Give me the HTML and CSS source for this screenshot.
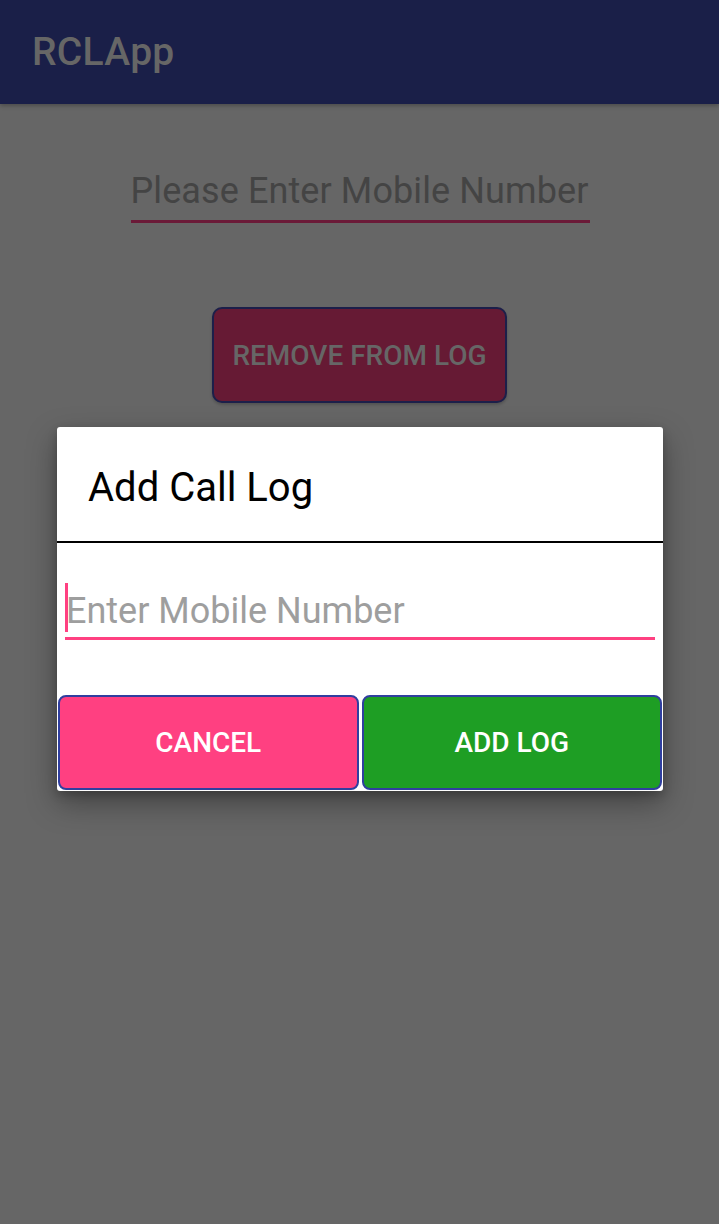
FILE: index.html
```html
<!DOCTYPE html>
<html lang="en">
<head>
<meta charset="utf-8">
<title>RCLApp</title>
<link rel="stylesheet" href="styles.css">
</head>
<body>
<header class="appbar"><h1 class="appbar-title">RCLApp</h1></header>
<main class="content">
  <div class="phone-field"><span class="phone-hint">Please Enter Mobile Number</span></div>
  <button class="remove-btn" type="button">REMOVE FROM LOG</button>
</main>
<div class="overlay">
  <section class="dialog">
    <h2 class="dialog-title">Add Call Log</h2>
    <div class="dialog-divider"></div>
    <div class="dialog-field">
      <span class="caret"></span><span class="dialog-hint">Enter Mobile Number</span>
    </div>
    <div class="dialog-actions">
      <button class="action cancel" type="button">CANCEL</button>
      <button class="action add" type="button">ADD LOG</button>
    </div>
  </section>
</div>
</body>
</html>
```
FILE: styles.css
```css
* { box-sizing: border-box; }
html, body { margin: 0; padding: 0; }
body {
  width: 719px;
  height: 1224px;
  background: #666666;
  font-family: Roboto, "Noto Sans", "Liberation Sans", sans-serif;
  overflow: hidden;
}
.appbar {
  height: 104px;
  background: #1a1f48;
  display: flex;
  align-items: center;
  padding-left: 32px;
  box-shadow: 0 2px 4px rgba(0,0,0,0.25);
  position: relative;
}
.appbar-title {
  margin: 0;
  font-size: 39px;
  font-weight: 500;
  color: #666666;
  line-height: 1;
  letter-spacing: 0.3px;
}
.content {
  display: flex;
  flex-direction: column;
  align-items: center;
  padding-top: 65px;
}
.phone-field {
  width: 459px;
  margin-left: 1px;
  border-bottom: 3px solid #6b1a38;
  padding: 0;
  line-height: 44px;
  white-space: nowrap;
}
.phone-hint {
  font-size: 36px;
  color: #444444;
  letter-spacing: 0.1px;
}
.remove-btn {
  margin-top: 84px;
  width: 295px;
  height: 96px;
  border: 2px solid #1c1f4a;
  border-radius: 10px;
  background: #661a34;
  color: #666666;
  font-family: inherit;
  font-size: 28px;
  font-weight: 500;
  padding: 0;
  box-shadow: 0 2px 3px rgba(0,0,0,0.2);
}
.overlay {
  position: absolute;
  inset: 0;
  display: flex;
  justify-content: center;
  align-items: flex-start;
  padding-top: 427px;
}
.dialog {
  width: 606px;
  height: 364px;
  margin-left: 1px;
  background: #ffffff;
  border-radius: 3px;
  box-shadow: 0 12px 30px rgba(0,0,0,0.35), 0 4px 10px rgba(0,0,0,0.2);
  display: flex;
  flex-direction: column;
}
.dialog-title {
  margin: 0;
  height: 114px;
  display: flex;
  align-items: center;
  padding-left: 31px;
  padding-top: 6px;
  font-size: 40px;
  font-weight: 400;
  color: #000000;
  white-space: nowrap;
}
.dialog-divider {
  height: 2px;
  background: #000000;
}
.dialog-field {
  margin: 40px 8px 0 8px;
  height: 57px;
  border-bottom: 3px solid #ff4081;
  display: flex;
  align-items: flex-start;
}
.caret {
  width: 3px;
  height: 49px;
  background: #ff4081;
  flex: none;
}
.dialog-hint {
  font-size: 36px;
  line-height: 56px;
  color: #9e9e9e;
  margin-left: -2px;
  white-space: nowrap;
}
.dialog-actions {
  margin-top: 55px;
  display: flex;
  gap: 3px;
  padding: 0 1px;
}
.action {
  flex: 1;
  height: 95px;
  border: 2px solid #303f9f;
  border-radius: 8px;
  color: #ffffff;
  font-family: inherit;
  font-size: 28px;
  font-weight: 500;
  padding: 0;
}
.cancel { background: #ff4081; }
.add { background: #1e9e24; }
```
